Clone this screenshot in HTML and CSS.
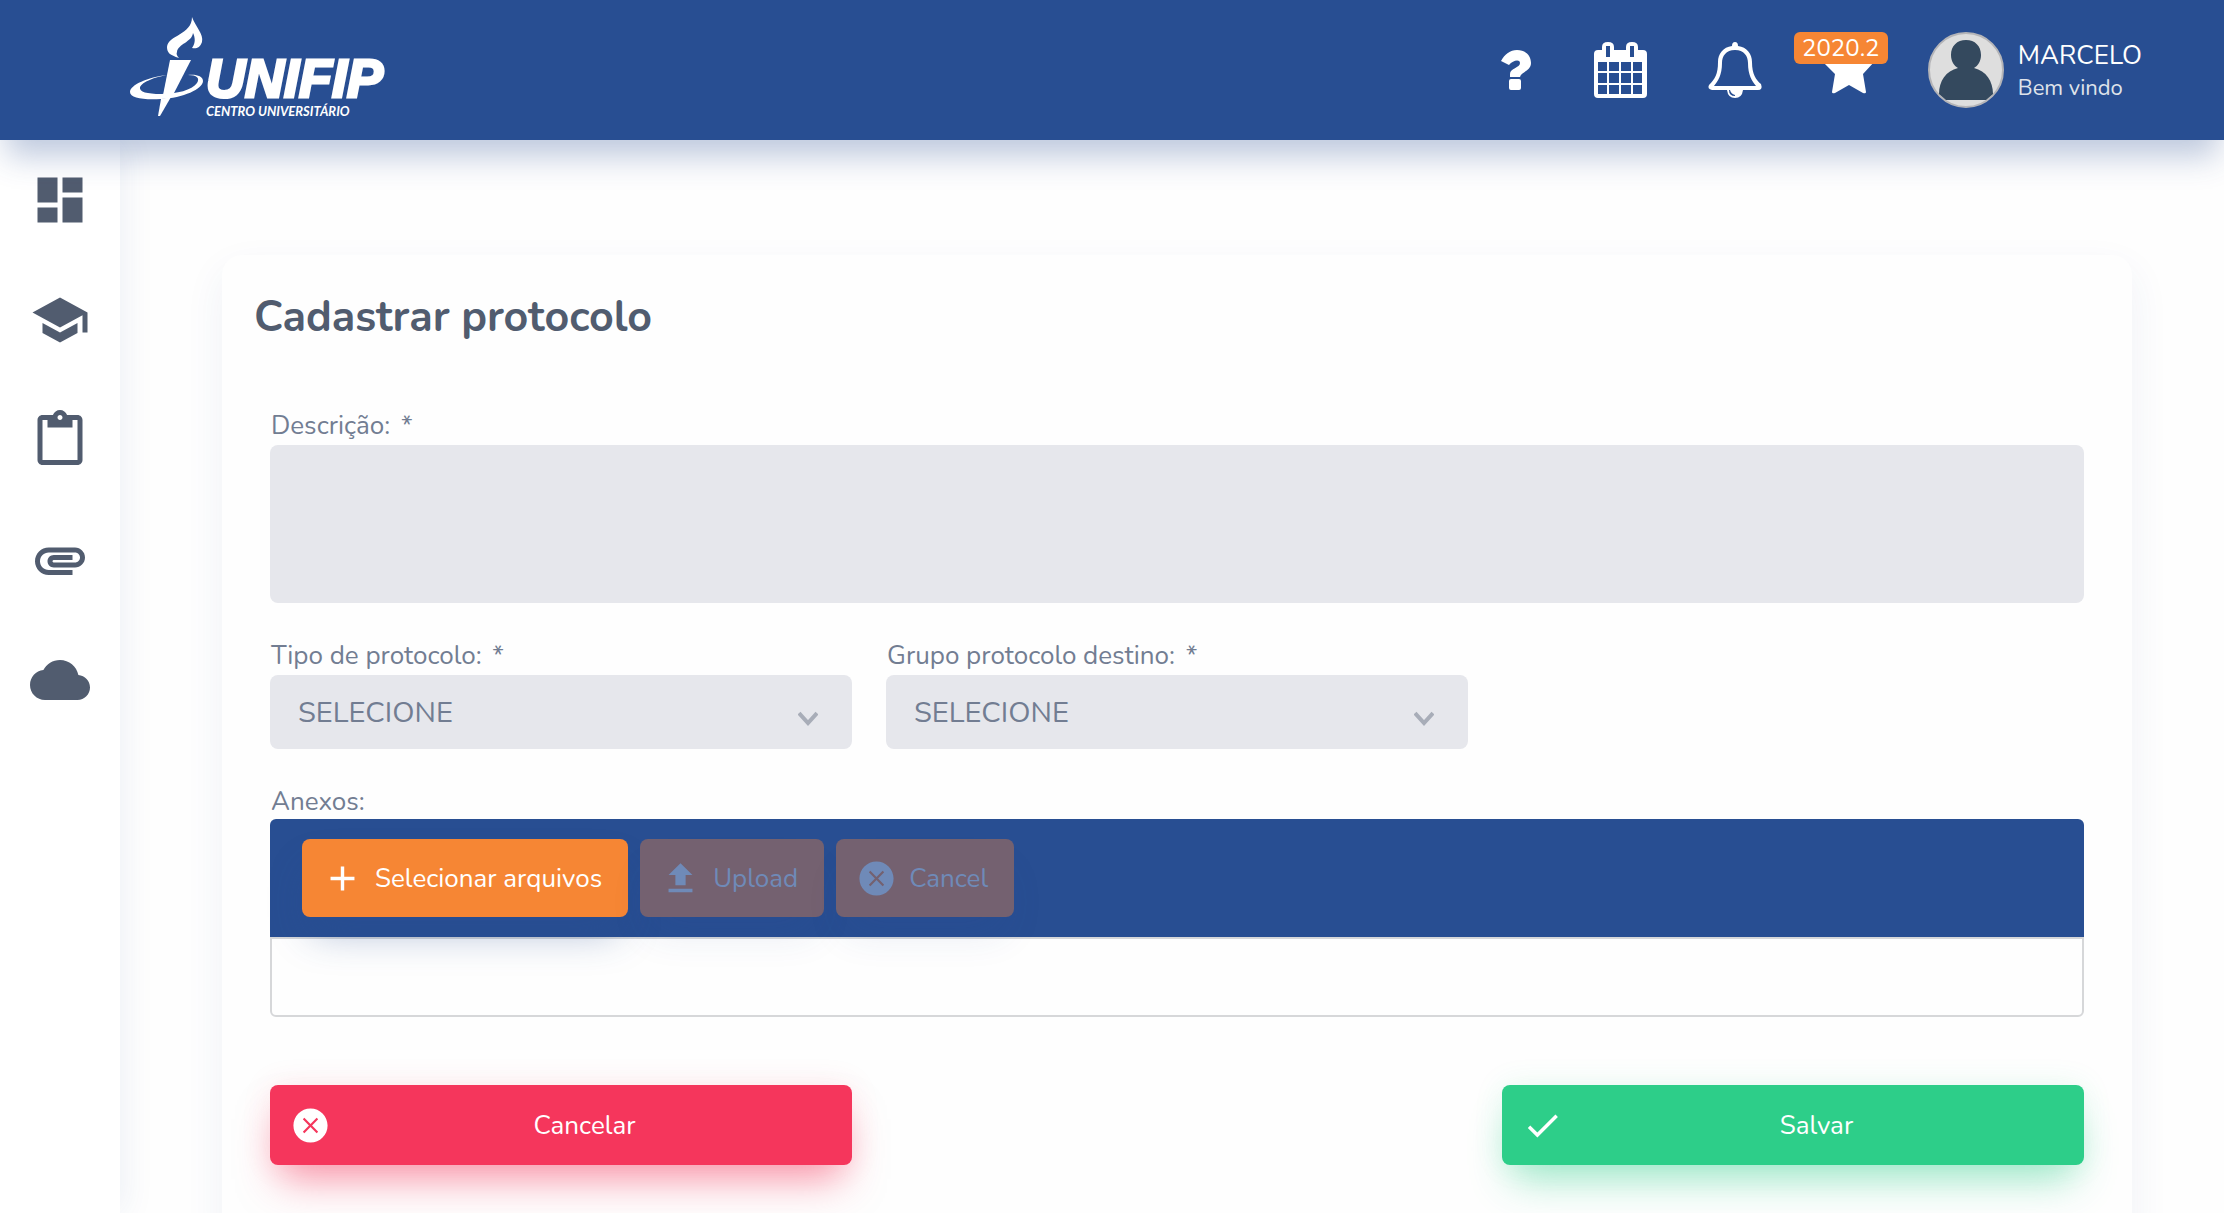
FILE: index.html
```html
<!DOCTYPE html>
<html lang="pt-br">
<head>
    <meta charset="UTF-8">
    <meta name="viewport" content="width=device-width, initial-scale=1.0">
    <title>Cadastrar protocolo</title>
    <link rel="stylesheet" href="styles.css">
</head>
<body>
    <header class="topbar">
        <a href="#" class="logo">
            <svg class="logo-torch" viewBox="0 0 76 104" aria-hidden="true">
                <path d="M62 0C65 9 74 17 72 25C70 31 66 32 62 31C66 26 65 20 63 16C62 25 48 27 47 35C46 37 47 39 49 41C40 38 37 36 37 30C38 18 62 18 62 0Z"/>
                <path d="M40 43H61L43 78H33Z"/>
                <path d="M31 82L41 80L30 99H28Z"/>
                <path fill-rule="evenodd" d="M37 58C18 60 0 68 0 75C0 81 13 83 31 82C53 81 73 72 73 64C73 59 66 57 58 58C67 58 70 61 67 66C62 73 47 77 31 77C17 77 9 75 10 70C12 65 25 60 37 58Z"/>
            </svg>
            <span class="logo-text">
                <span class="logo-name">UNIFIP</span>
                <span class="logo-sub">CENTRO UNIVERSITÁRIO</span>
            </span>
        </a>
        <nav class="topbar-menu">
            <a href="#" class="top-link top-link-help" aria-label="Ajuda">
                <svg viewBox="0 0 32 56"><path d="M0 19C4 12 9 8 16 8C25 8 30 14 30 21C30 29 20 30 19 35H9V32C9 26 19 26 19 21C19 17 12 18 8 23ZM10 37H18Q20 37 20 39V46Q20 48 18 48H10Q8 48 8 46V39Q8 37 10 37Z"/></svg>
            </a>
            <a href="#" class="top-link" aria-label="Calendário">
                <svg viewBox="0 0 56 56"><path fill-rule="evenodd" d="M5 8H9V5Q9 0 15 0Q21 0 21 5V8H33V5Q33 0 39 0Q45 0 45 5V8H50Q54 8 54 12V52Q54 56 50 56H5Q1 56 1 52V12Q1 8 5 8ZM13 4V15H17V4ZM37 4V15H41V4ZM5 20V29H14V20ZM16 20V29H26V20ZM28 20V29H38V20ZM40 20V29H49V20ZM5 31V41H14V31ZM16 31V41H26V31ZM28 31V41H38V31ZM40 31V41H49V31ZM5 43V52H14V43ZM16 43V52H26V43ZM28 43V52H38V43ZM40 43V52H49V43Z"/></svg>
            </a>
            <a href="#" class="top-link" aria-label="Notificações">
                <svg viewBox="0 0 56 56"><path fill-rule="evenodd" d="M28 0Q31 0 31 4C40 5 45 12 45 20C45 32 49 38 54 42Q56 48 51 48H36Q35 56 28 56Q21 56 20 48H5Q0 47 2 43C8 37 11 32 11 20C11 12 16 5 25 4Q25 0 28 0ZM28 8C19 8 15 14 15 21C15 33 11 39 7 44H49C45 39 41 33 41 21C41 14 37 8 28 8ZM22 48Q22 54 28 54V53Q24 52 23 48Z"/></svg>
            </a>
            <a href="#" class="top-link" aria-label="Período letivo 2020.2">
                <svg viewBox="0 0 56 56"><path d="M28 0L36 17L54 19L42 32L45 50Q45 52 42 51L28 43L14 51Q11 52 11 50L14 32L1 19L20 17Z"/></svg>
                <span class="badge">2020.2</span>
            </a>
        </nav>
        <a href="#" class="user">
            <svg class="user-avatar" viewBox="0 0 76 76" aria-hidden="true">
                <circle class="avatar-bg" cx="38" cy="38" r="37"/>
                <path class="avatar-body" d="M38 8C29 8 23 14 23 23C23 29 26 34 30 36C18 39 11 49 11 62L18 68H58L65 62C65 49 58 39 46 36C50 34 53 29 53 23C53 14 47 8 38 8Z"/>
            </svg>
            <span class="user-info">
                <span class="user-name">MARCELO</span>
                <span class="user-role">Bem vindo</span>
            </span>
        </a>
    </header>

    <div class="layout">
        <nav class="sidebar">
            <a href="#" class="side-link" aria-label="Painel">
                <svg viewBox="0 0 24 24"><path d="M3 13h8V3H3v10zm0 8h8v-6H3v6zm10 0h8V11h-8v10zm0-18v6h8V3h-8z"/></svg>
            </a>
            <a href="#" class="side-link" aria-label="Acadêmico">
                <svg viewBox="0 0 24 24"><path d="M5 13.18v4L12 21l7-3.82v-4L12 17l-7-3.82zM12 3L1 9l11 6 9-4.91V17h2V9L12 3z"/></svg>
            </a>
            <a href="#" class="side-link" aria-label="Protocolos">
                <svg viewBox="0 0 24 24"><path d="M19 2h-4.18C14.4.84 13.3 0 12 0c-1.3 0-2.4.84-2.82 2H5c-1.1 0-2 .9-2 2v16c0 1.1.9 2 2 2h14c1.1 0 2-.9 2-2V4c0-1.1-.9-2-2-2zm-7 0c.55 0 1 .45 1 1s-.45 1-1 1-1-.45-1-1 .45-1 1-1zm7 18H5V4h2v3h10V4h2v16z"/></svg>
            </a>
            <a href="#" class="side-link" aria-label="Anexos">
                <svg viewBox="0 0 24 24"><path d="M2 12.5C2 9.46 4.46 7 7.5 7H18c2.21 0 4 1.79 4 4s-1.79 4-4 4H9.5C8.12 15 7 13.88 7 12.5S8.12 10 9.5 10H17v2H9.41c-.55 0-.55 1 0 1H18c1.1 0 2-.9 2-2s-.9-2-2-2H7.5C5.57 9 4 10.57 4 12.5S5.57 16 7.5 16H17v2H7.5C4.46 18 2 15.54 2 12.5z"/></svg>
            </a>
            <a href="#" class="side-link" aria-label="Nuvem">
                <svg viewBox="0 0 24 24"><path d="M19.35 10.04C18.67 6.59 15.64 4 12 4 9.11 4 6.6 5.64 5.35 8.04 2.34 8.36 0 10.91 0 14c0 3.31 2.69 6 6 6h13c2.76 0 5-2.24 5-5 0-2.64-2.05-4.78-4.65-4.96z"/></svg>
            </a>
        </nav>

        <main class="content">
            <form class="card">
                <h1 class="card-title">Cadastrar protocolo</h1>
                <div class="form-grid">
                    <div class="field field-full">
                        <label for="descricao">Descrição: <span class="required">*</span></label>
                        <textarea id="descricao" class="control"></textarea>
                    </div>
                    <div class="field">
                        <label for="tipo">Tipo de protocolo: <span class="required">*</span></label>
                        <div class="select-wrap">
                            <select id="tipo" class="control">
                                <option>SELECIONE</option>
                            </select>
                            <svg class="select-arrow" viewBox="0 0 20 16" aria-hidden="true"><path d="M1 2L10 12L19 2"/></svg>
                        </div>
                    </div>
                    <div class="field">
                        <label for="grupo">Grupo protocolo destino: <span class="required">*</span></label>
                        <div class="select-wrap">
                            <select id="grupo" class="control">
                                <option>SELECIONE</option>
                            </select>
                            <svg class="select-arrow" viewBox="0 0 20 16" aria-hidden="true"><path d="M1 2L10 12L19 2"/></svg>
                        </div>
                    </div>
                    <div class="field field-full">
                        <label for="selecionar">Anexos:</label>
                        <div class="upload">
                            <div class="upload-bar">
                                <button type="button" id="selecionar" class="btn btn-orange">
                                    <svg viewBox="0 0 24 24"><path d="M19 13h-6v6h-2v-6H5v-2h6V5h2v6h6v2z"/></svg>
                                    Selecionar arquivos
                                </button>
                                <button type="button" class="btn btn-orange" disabled>
                                    <svg viewBox="0 0 24 24"><path d="M9 16h6v-6h4l-7-7-7 7h4zm-4 2h14v2H5z"/></svg>
                                    Upload
                                </button>
                                <button type="button" class="btn btn-orange" disabled>
                                    <svg viewBox="0 0 24 24"><path d="M12 2C6.47 2 2 6.47 2 12s4.47 10 10 10 10-4.47 10-10S17.53 2 12 2zm4.5 13.59L15.59 16.5 12 12.91 8.41 16.5 7.5 15.59 11.09 12 7.5 8.41 8.41 7.5 12 11.09 15.59 7.5 16.5 8.41 12.91 12 16.5 15.59z"/></svg>
                                    Cancel
                                </button>
                            </div>
                            <div class="upload-files"></div>
                        </div>
                    </div>
                </div>
                <div class="form-grid form-actions">
                    <button type="button" class="btn btn-action btn-red">
                        <svg viewBox="0 0 24 24"><path d="M12 2C6.47 2 2 6.47 2 12s4.47 10 10 10 10-4.47 10-10S17.53 2 12 2zm4.5 13.59L15.59 16.5 12 12.91 8.41 16.5 7.5 15.59 11.09 12 7.5 8.41 8.41 7.5 12 11.09 15.59 7.5 16.5 8.41 12.91 12 16.5 15.59z"/></svg>
                        <span>Cancelar</span>
                    </button>
                    <button type="submit" class="btn btn-action btn-green">
                        <svg viewBox="0 0 24 24"><path d="M9 16.17L4.83 12l-1.42 1.41L9 19 21 7l-1.41-1.41z"/></svg>
                        <span>Salvar</span>
                    </button>
                </div>
            </form>
        </main>
    </div>
</body>
</html>
```
FILE: styles.css
```css
* {
    box-sizing: border-box;
}
body {
    margin: 0;
    height: 100vh;
    display: flex;
    flex-direction: column;
    overflow: hidden;
    background-color: #fefefe;
    color: #727d92;
    font-family: Nunito, Lato, sans-serif;
    font-size: 26px;
}
a {
    color: inherit;
    text-decoration: none;
}
svg {
    display: block;
    fill: currentColor;
}

/* top bar */
.topbar {
    position: relative;
    z-index: 2;
    flex: none;
    height: 140px;
    display: flex;
    align-items: center;
    padding: 0 82px 0 130px;
    background-color: #284e92;
    color: #fff;
    box-shadow: 0 22px 30px -6px rgba(39, 77, 145, 0.3);
}
.logo {
    display: flex;
    align-items: flex-end;
    padding-bottom: 2px;
}
.logo-torch {
    width: 76px;
    height: 104px;
}
.logo-text {
    display: flex;
    flex-direction: column;
    font-style: italic;
    font-weight: bold;
}
.logo-name {
    font-family: "Liberation Sans", Arial, sans-serif;
    font-size: 54px;
    line-height: 46px;
    -webkit-text-stroke: 3px #fff;
}
.logo-sub {
    font-family: Lato, sans-serif;
    font-size: 13px;
    line-height: 20px;
}
.topbar-menu {
    display: flex;
    gap: 58px;
    margin-left: auto;
    margin-right: 51px;
}
.top-link {
    position: relative;
    width: 56px;
    height: 56px;
}
.top-link-help {
    width: 36px;
}
.top-link svg {
    width: 100%;
    height: 100%;
}
.badge {
    position: absolute;
    top: -10px;
    right: -11px;
    width: 94px;
    border-radius: 6px;
    background-color: #f68634;
    font-size: 24px;
    line-height: 32px;
    text-align: center;
}
.user {
    display: flex;
    align-items: center;
    gap: 14px;
}
.user-avatar {
    width: 76px;
    height: 76px;
}
.avatar-bg {
    fill: #dedede;
    stroke: #b5b5b8;
    stroke-width: 2;
}
.avatar-body {
    fill: #34495e;
}
.user-info {
    display: flex;
    flex-direction: column;
    padding-top: 4px;
    line-height: 33px;
}
.user-role {
    font-size: 22px;
    color: #dfe3ea;
}

/* side menu */
.layout {
    flex: 1;
    min-height: 0;
    display: flex;
}
.sidebar {
    flex: none;
    width: 120px;
    background-color: #fff;
    color: #515c6f;
    box-shadow: 4px 0 30px rgba(39, 77, 145, 0.08);
}
.side-link {
    display: flex;
    align-items: center;
    justify-content: center;
    height: 120px;
}
.side-link svg {
    width: 60px;
    height: 60px;
}

/* form */
.content {
    flex: 1;
    overflow-y: auto;
    scrollbar-width: none;
    padding: 115px 92px 60px 102px;
}
.card {
    padding: 32px 48px 80px;
    border-radius: 20px;
    background-color: #fefefe;
    box-shadow: 0 16px 40px rgba(39, 77, 145, 0.07);
}
.card-title {
    margin: 0 0 62px -16px;
    color: #515c6f;
    font-size: 43px;
    line-height: 60px;
}
.form-grid {
    display: grid;
    grid-template-columns: repeat(3, 1fr);
    column-gap: 34px;
    row-gap: 36px;
}
.field-full {
    grid-column: 1 / -1;
}
.field label {
    display: block;
    padding: 0 1px;
    line-height: 34px;
}
.required {
    margin-left: 4px;
}
.control {
    display: block;
    width: 100%;
    margin: 2px 0 0;
    border: none;
    border-radius: 8px;
    background-color: #e6e7ec;
    color: #727d92;
    font-family: inherit;
    font-size: 29px;
}
textarea.control {
    height: 158px;
    padding: 20px 28px;
    resize: none;
}
select.control {
    height: 74px;
    padding: 0 28px;
    appearance: none;
}
.select-wrap {
    position: relative;
}
.select-arrow {
    position: absolute;
    right: 34px;
    bottom: 22px;
    width: 20px;
    height: 16px;
    fill: none;
    stroke: #a8adb8;
    stroke-width: 4;
    pointer-events: none;
}
.upload-bar {
    display: flex;
    gap: 12px;
    padding: 20px 32px;
    border-radius: 6px 6px 0 0;
    background-color: #284e92;
}
.upload-files {
    height: 80px;
    border: 2px solid #d6d7d9;
    border-radius: 0 0 6px 6px;
}
.btn {
    display: flex;
    align-items: center;
    gap: 12px;
    height: 78px;
    padding: 0 26px 0 20px;
    border: none;
    border-radius: 8px;
    color: #fff;
    font-family: inherit;
    font-size: 26px;
    cursor: pointer;
}
.btn svg {
    flex: none;
    width: 41px;
    height: 41px;
}
.btn-orange {
    background-color: #f68634;
    box-shadow: 0 24px 40px -10px rgba(39, 77, 145, 0.4);
}
.btn:disabled {
    background-color: #746170;
    color: #6f8ab8;
    box-shadow: 0 24px 40px -10px rgba(39, 77, 145, 0.12);
    cursor: default;
}
.form-actions {
    margin-top: 68px;
}
.btn-action {
    height: 80px;
}
.btn-action span {
    flex: 1;
    text-align: center;
}
.btn-red {
    background-color: #f5365c;
    box-shadow: 0 24px 40px -10px rgba(245, 54, 92, 0.5), 0 0 30px rgba(245, 54, 92, 0.1);
}
.btn-green {
    grid-column: 3;
    background-color: #2dce89;
    box-shadow: 0 24px 40px -10px rgba(45, 206, 137, 0.45), 0 0 30px rgba(45, 206, 137, 0.1);
}
```
